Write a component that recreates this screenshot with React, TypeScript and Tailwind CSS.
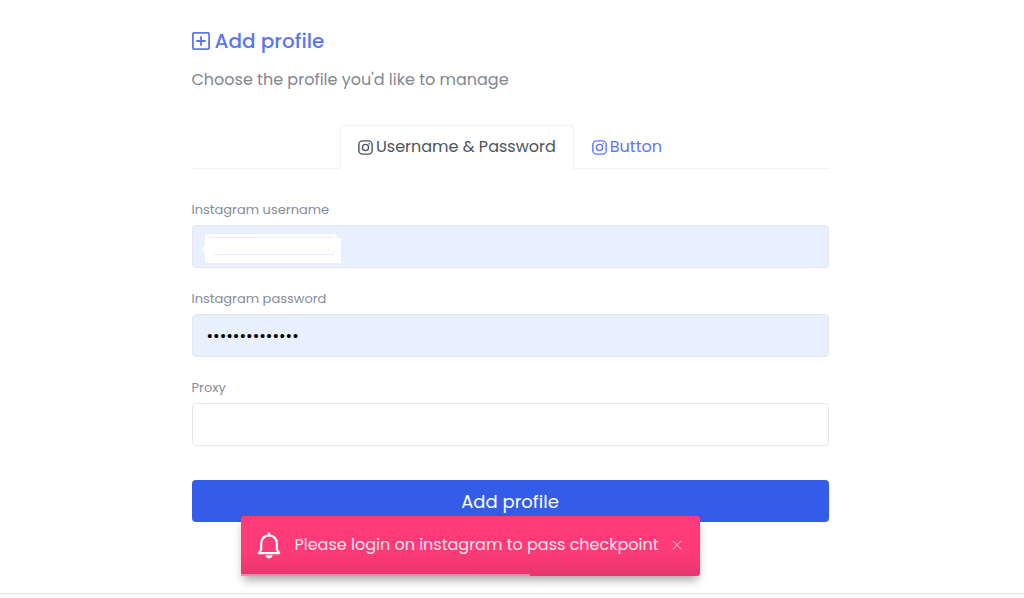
import { useState } from "react"
import type { ReactNode } from "react"

const PlusSquareIcon = () => (
  <svg viewBox="0 0 18 18" className="size-[18px] shrink-0" fill="none" stroke="currentColor" strokeWidth="1.8" aria-hidden="true">
    <rect x="0.9" y="0.9" width="16.2" height="16.2" rx="1" />
    <path d="M9 4.3v9.4M4.3 9h9.4" />
  </svg>
)

const InstagramIcon = () => (
  <svg viewBox="0 0 16 16" className="size-[15px] shrink-0" fill="none" stroke="currentColor" strokeWidth="1.5" aria-hidden="true">
    <rect x="0.9" y="0.9" width="14.2" height="14.2" rx="4" />
    <circle cx="8" cy="8" r="3.3" />
    <circle cx="12" cy="4" r="0.9" fill="currentColor" stroke="none" />
  </svg>
)

const BellIcon = () => (
  <svg viewBox="0 0 24 27" className="h-[27px] w-6 shrink-0" fill="none" stroke="currentColor" strokeWidth="2.2" aria-hidden="true">
    <path d="M4.2 17.5V11.6C4.2 6.6 7.6 3.4 12 3.4s7.8 3.2 7.8 8.2v5.9l2.4 3.7H1.8z" strokeLinejoin="round" />
    <path d="M12 3.4V1.4" strokeLinecap="round" />
    <path d="M8.3 23.2h7.4c-.5 2-1.9 3.2-3.7 3.2s-3.2-1.2-3.7-3.2z" fill="currentColor" stroke="none" />
  </svg>
)

const CloseIcon = () => (
  <svg viewBox="0 0 10 10" className="size-[10px]" stroke="currentColor" strokeWidth="1.2" aria-hidden="true">
    <path d="M.7.7l8.6 8.6M9.3.7L.7 9.3" />
  </svg>
)

// White brush strokes that hide the account name
const Redaction = () => (
  <svg viewBox="0 0 140 30" className="pointer-events-none absolute top-[9px] left-[10px] h-[30px] w-[140px]" aria-hidden="true">
    <path d="M3 1Q3 0 5 0H133Q135 0 135 4H138Q139 4 139 6V28Q139 29 138 29H4Q3 29 3 27V20L0 15L3 11z" fill="#fff" />
    <path d="M6 3.5H132M11 20.5H132V16M126 16h2" stroke="#e8effd" fill="none" />
    <path d="M14 3.5H54" stroke="#dfe7fb" />
  </svg>
)

interface FieldProps {
  id: string
  label: string
  type?: string
  defaultValue?: string
  filled?: boolean
  children?: ReactNode
}

function Field({ id, label, type = "text", defaultValue, filled, children }: FieldProps) {
  return (
    <div>
      <label htmlFor={id} className="mb-[6px] block text-[13px] leading-[18px] text-[#868b99]">{label}</label>
      <div className="relative">
        <input
          id={id}
          type={type}
          defaultValue={defaultValue}
          className={`block h-[43px] w-full rounded border px-[14px] text-[16px] text-black outline-none ${filled ? "border-[#e2e7f2] bg-[#e8effd]" : "border-[#e6e7ef] bg-white"}`}
        />
        {children}
      </div>
    </div>
  )
}

export default function App() {
  const [tab, setTab] = useState("password")
  const [toast, setToast] = useState(true)

  const tabClass = (active: boolean) =>
    `-mb-px flex h-11 items-center gap-[3px] rounded-t border px-[17px] text-[16px] ${active ? "border-[#f3f3f6] border-b-white bg-white text-[#4b5560]" : "border-transparent text-[#6276f2]"}`

  return (
    <div className="bg-white pr-1 font-['Poppins',Inter,sans-serif]">
      <main className="mx-auto max-w-[637px] pt-[26px]">
        <h1 className="flex items-center gap-[5px] text-[20px] leading-[30px] font-medium text-[#5b77ec]">
          <PlusSquareIcon />
          Add profile
        </h1>
        <p className="mt-3 text-[16px] leading-6 text-[#828690]">Choose the profile you'd like to manage</p>

        <div role="tablist" className="mt-[33px] flex justify-center border-b border-[#f3f3f6]">
          <button type="button" role="tab" aria-selected={tab === "password"} onClick={() => setTab("password")} className={tabClass(tab === "password")}>
            <InstagramIcon />
            Username &amp; Password
          </button>
          <button type="button" role="tab" aria-selected={tab === "button"} onClick={() => setTab("button")} className={tabClass(tab === "button")}>
            <InstagramIcon />
            Button
          </button>
        </div>

        <form className="mt-8 flex flex-col gap-[22px]" onSubmit={(e) => e.preventDefault()}>
          <Field id="username" label="Instagram username" filled>
            <Redaction />
          </Field>
          <Field id="password" label="Instagram password" type="password" defaultValue="abcdefghijklmn" filled />
          <Field id="proxy" label="Proxy" />

          <div className="relative mt-3">
            <button type="submit" className="block h-[42px] w-full rounded bg-[#335de8] text-[18px] text-white">Add profile</button>

            {toast && (
              <div role="alert" className="absolute top-9 left-[49px] flex h-[60px] w-[459px] items-center rounded-[3px] bg-linear-to-b from-[#ff3a79] from-60% to-[#e5366f] pr-[18px] pb-[2px] pl-4 text-white shadow-[0_6px_10px_-2px_rgba(0,0,0,0.35)]">
                <BellIcon />
                <span className="ml-[14px] flex-1 text-[16px] whitespace-nowrap text-[#ffe3ec]">Please login on instagram to pass checkpoint</span>
                <button type="button" aria-label="Close" onClick={() => setToast(false)} className="text-[#ff9dbd]">
                  <CloseIcon />
                </button>
                <div className="absolute bottom-0 left-0 h-[2px] w-[63%] bg-[#f58cae]" />
              </div>
            )}
          </div>
        </form>
      </main>
      <footer className="mt-[71px] -mr-1 h-1 border-t border-[#dcdddf]" />
    </div>
  )
}
